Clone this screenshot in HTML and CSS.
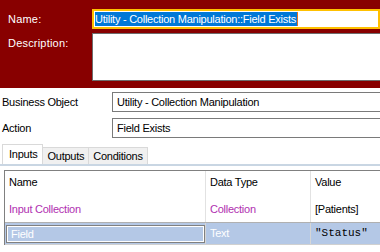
FILE: index.html
```html
<!DOCTYPE html>
<html lang="en">
<head>
  <meta charset="UTF-8">
  <title>Action Properties</title>
  <link rel="stylesheet" href="styles.css">
</head>
<body>
  <!-- Stage header (name + description) -->
  <div class="stage-header">
    <div class="header-label">Name:</div>
    <div class="name-box"><span class="selected-text">Utility - Collection Manipulation::Field Exists</span></div>
    <div class="header-label">Description:</div>
    <div class="desc-box"></div>
  </div>

  <!-- Business object / action -->
  <div class="props">
    <div class="prop-label">Business Object</div>
    <div class="prop-box">Utility - Collection Manipulation</div>
    <div class="prop-label">Action</div>
    <div class="prop-box">Field Exists</div>
  </div>

  <!-- Tabs -->
  <div class="tabs">
    <div class="tab active">Inputs</div>
    <div class="tab">Outputs</div>
    <div class="tab">Conditions</div>
  </div>

  <div class="tab-panel">
    <div class="grid">
      <div class="row head">
        <div class="cell">Name</div>
        <div class="cell col-line">Data Type</div>
        <div class="cell col-line">Value</div>
      </div>
      <div class="row coll">
        <div class="cell">Input Collection</div>
        <div class="cell col-line">Collection</div>
        <div class="cell col-line value">[Patients]</div>
      </div>
      <div class="row selected">
        <div class="cell"><div class="edit-box">Field</div></div>
        <div class="cell col-line">Text</div>
        <div class="cell col-line value mono">"Status"</div>
      </div>
    </div>
  </div>
</body>
</html>
```

FILE: styles.css
```css
body {
  margin: 0;
  width: 380px;
  height: 252px;
  overflow: hidden;
  background: #ffffff;
  font-family: "Liberation Sans", Arial, sans-serif;
  font-size: 11px;
  letter-spacing: -0.25px;
  color: #000000;
}

.stage-header {
  background-color: #880000;
  height: 88px;
  box-sizing: border-box;
  padding-top: 9px;
  display: grid;
  grid-template-columns: 92px 1fr;
  grid-template-rows: 20px 48px;
  row-gap: 4px;
}

.header-label {
  color: #ffffff;
  padding-left: 8px;
  padding-top: 4px;
  letter-spacing: 0.2px;
}

.name-box {
  background: #ffffff;
  border: 2px solid #ffc000;
  padding: 1px 1px;
  line-height: 14px;
  white-space: nowrap;
  overflow: hidden;
}

.selected-text {
  background: #0078d7;
  color: #ffffff;
  display: inline-block;
  padding-right: 1px;
  border-right: 1px solid #e8701c;
}

.desc-box {
  background: #ffffff;
  border: 1px solid #6d6d6d;
  border-right: none;
}

.props {
  display: grid;
  grid-template-columns: 112px 1fr;
  grid-template-rows: 20px 20px;
  row-gap: 6px;
  margin-top: 4px;
}

.prop-label {
  padding-left: 2px;
  line-height: 20px;
}

.prop-box {
  border: 1px solid #7a7a7a;
  border-right: none;
  padding-left: 4px;
  line-height: 18px;
  white-space: nowrap;
}

.tabs {
  display: flex;
  align-items: flex-end;
  height: 20px;
  margin-top: 6px;
  padding-left: 2px;
}

.tab {
  height: 17px;
  line-height: 17px;
  padding: 0 4px;
  background: #f0f0f0;
  border: 1px solid #d9d9d9;
  border-bottom: none;
  border-left: none;
  box-sizing: border-box;
}

.tab.active {
  height: 20px;
  line-height: 18px;
  background: #ffffff;
  border-left: 1px solid #d9d9d9;
  padding: 0 5px 0 6px;
}

.tab-panel {
  border-top: 2px solid #c9d6e3;
  padding: 4px 0 0 4px;
}

.grid {
  border-top: 1px solid #808080;
  border-left: 1px solid #808080;
}

.row {
  display: grid;
  grid-template-columns: 200px 105px 1fr;
  height: 24px;
}

.row.head .cell {
  padding-top: 5px;
}

.row.coll {
  height: 27px;
  color: #b030b0;
  border-bottom: 1px solid #b0b0b0;
}

.row.coll .cell {
  padding-top: 8px;
}

.row.coll .value {
  color: #000000;
}

.cell {
  padding-left: 4px;
  white-space: nowrap;
}

.col-line {
  border-left: 1px solid #e2e2e2;
}

.row.selected {
  height: 21px;
  background: #b4c8e6;
  color: #ffffff;
  border-bottom: 1px solid #d0d0d0;
}

.row.selected .cell {
  padding-top: 4px;
}

.row.selected .cell:first-child {
  padding: 2px 0 0 1px;
}

.edit-box {
  height: 18px;
  box-sizing: border-box;
  border: 1px solid #808080;
  box-shadow: inset 0 0 0 1px #ffffff;
  padding: 2px 0 0 4px;
  color: #ffffff;
}

.row.selected .col-line {
  border-left-color: #d6d6d6;
}

.mono {
  font-family: "Liberation Mono", "Courier New", monospace;
  letter-spacing: 0;
  color: #000000;
}
```
